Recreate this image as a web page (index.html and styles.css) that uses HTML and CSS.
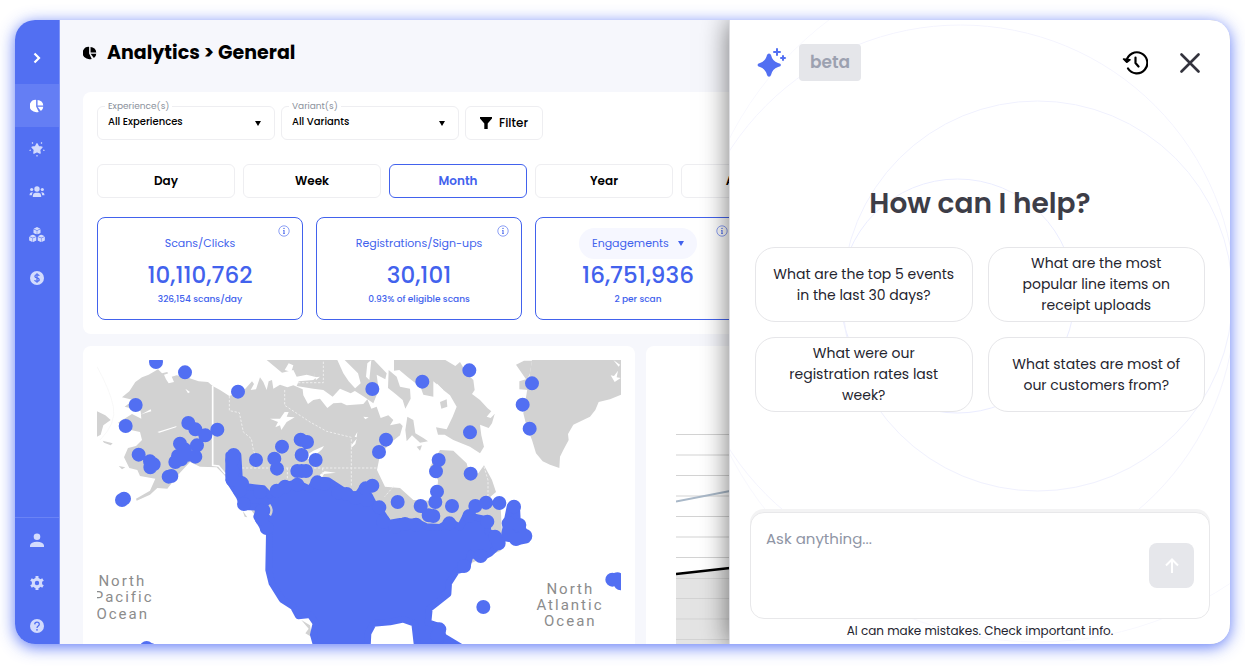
FILE: index.html
```html
<!DOCTYPE html>
<html lang="en">
<head>
  <meta charset="UTF-8" />
  <meta name="viewport" content="width=device-width, initial-scale=1.0" />
  <title>Analytics</title>
  <link rel="stylesheet" href="styles.css">
</head>
<body>
  <svg class="defs" aria-hidden="true">
    <symbol id="pie" viewBox="0 0 24 24">
      <path d="M10.500 1.500A10.500 10.500 0 0 0 2 19Q7 24 15 22.200L10.500 13z" />
      <path d="M13 1.500V11h9.700A10 10 0 0 0 13 1.500z" />
      <path d="M13 13.200h9.700a9 9 0 0 1-4 7.300z" />
    </symbol>
    <symbol id="info" viewBox="0 0 12 12">
      <circle cx="6" cy="6" r="5.200" fill="none" stroke="currentColor" stroke-width=".6" />
      <circle cx="6" cy="3.400" r=".7" />
      <path d="M5 5h1.500v3.500H7V9H5v-.5h.5v-3H5z" />
    </symbol>
    <symbol id="cube" viewBox="0 0 10 10">
      <path d="M5 0l4.500 2.200L5 4.400.500 2.200zM.200 2.800L4.700 5v5L.200 7.800zM9.800 2.800L5.300 5v5l4.500-2.200z" />
    </symbol>
  </svg>

  <div class="app">
    <nav class="sidebar">
      <button class="expand" aria-label="Expand">
        <svg width="8" height="12" viewBox="0 0 8 12"><path d="M1.500 1.500L6 6l-4.500 4.500" fill="none" stroke="#fff" stroke-width="2.200" /></svg>
      </button>
      <a href="#" class="nav-item active" aria-label="Analytics"><svg width="14" height="14"><use href="#pie" /></svg></a>
      <a href="#" class="nav-item" aria-label="Experiences">
        <svg width="16" height="16" viewBox="0 0 16 16"><path d="M8 2.800l1.600 3 3.300.5-2.300 2.400.500 3.400L8 10.700l-3.100 1.400.500-3.400-2.300-2.400 3.300-.500z" stroke="currentColor" stroke-width="1.400" stroke-linejoin="round" /><path d="M3 1.500l1 1M13 1.500l-1 1M.500 9.500l1.300-.4M15.500 9.500l-1.300-.4M8 14v1.500" stroke="currentColor" stroke-width="1.200" /></svg>
      </a>
      <a href="#" class="nav-item" aria-label="Customers">
        <svg width="16" height="14" viewBox="0 0 16 14"><circle cx="8" cy="4" r="2.700" /><circle cx="2.700" cy="4.500" r="1.600" /><circle cx="13.300" cy="4.500" r="1.600" /><path d="M3.800 12v-1.500Q4 8 6.500 7.700h3Q12 8 12.200 10.500V12zM.5 10.200Q.5 7 3.800 7.200 2.900 8.500 2.800 10.200zM15.500 10.200Q15.500 7 12.200 7.200q.9 1.300 1 3z" /></svg>
      </a>
      <a href="#" class="nav-item" aria-label="Products">
        <svg width="16" height="16" viewBox="0 0 16 16"><use href="#cube" x="4.200" y="0" width="7.600" height="7.600" /><use href="#cube" x="0" y="7.500" width="7.600" height="7.600" /><use href="#cube" x="8.400" y="7.500" width="7.600" height="7.600" /></svg>
      </a>
      <a href="#" class="nav-item" aria-label="Billing">
        <svg width="14" height="14" viewBox="0 0 14 14"><circle cx="7" cy="7" r="7" /><path d="M9.200 4.900Q8.900 3.600 7 3.600 4.900 3.700 4.900 5.200 4.900 6.500 7 6.900t2.200 1.900Q9.200 10.300 7 10.400 4.900 10.400 4.700 9M7 2.200v9.600" fill="none" stroke="#526ff2" stroke-width="1.300" /></svg>
      </a>
      <div class="nav-foot">
        <a href="#" class="nav-item" aria-label="Account">
          <svg width="14" height="14" viewBox="0 0 14 14"><circle cx="7" cy="3.700" r="3.300" /><path d="M0 14v-1.700Q1 8.800 7 8.800t7 3.500V14z" /></svg>
        </a>
        <a href="#" class="nav-item" aria-label="Settings">
          <svg width="14" height="14" viewBox="0 0 14 14"><circle cx="7" cy="7" r="3.700" fill="none" stroke="currentColor" stroke-width="3" /><path d="M7 0v3M7 11v3M1 3.500L3.500 5M10.500 9l2.500 1.500M1 10.500L3.500 9M10.500 5L13 3.500" stroke="currentColor" stroke-width="3" /></svg>
        </a>
        <a href="#" class="nav-item" aria-label="Help">
          <svg width="14" height="14" viewBox="0 0 14 14"><circle cx="7" cy="7" r="7" /><path d="M4.700 5.400Q4.800 3.200 7 3.200T9.300 5.300Q9.300 6.300 8.200 7T7 9" fill="none" stroke="#526ff2" stroke-width="1.300" /><circle cx="7" cy="10.800" r=".9" fill="#526ff2" /></svg>
        </a>
      </div>
    </nav>

    <main class="main">
      <h1 class="title"><svg width="14" height="14"><use href="#pie" /></svg>Analytics &gt; General</h1>

      <section class="card summary">
        <div class="filters">
          <div class="field">
            <label for="experience">Experience(s)</label>
            <select id="experience"><option>All Experiences</option></select>
          </div>
          <div class="field">
            <label for="variant">Variant(s)</label>
            <select id="variant"><option>All Variants</option></select>
          </div>
          <button class="filter-btn">
            <svg width="12" height="12" viewBox="0 0 12 12"><path d="M0 0h12v1.500L7.700 6.500V12H4.300V6.500L0 1.500z" /></svg>
            Filter
          </button>
        </div>

        <div class="periods">
          <button>Day</button>
          <button>Week</button>
          <button class="selected">Month</button>
          <button>Year</button>
          <button>All Time</button>
        </div>

        <div class="stats">
          <div class="stat">
            <svg class="info" width="12" height="12"><use href="#info" /></svg>
            <div class="stat-name">Scans/Clicks</div>
            <div class="stat-value">10,110,762</div>
            <div class="stat-note">326,154 scans/day</div>
          </div>
          <div class="stat">
            <svg class="info" width="12" height="12"><use href="#info" /></svg>
            <div class="stat-name">Registrations/Sign-ups</div>
            <div class="stat-value">30,101</div>
            <div class="stat-note">0.93% of eligible scans</div>
          </div>
          <div class="stat">
            <svg class="info" width="12" height="12"><use href="#info" /></svg>
            <div class="stat-name pill">
              <select aria-label="Metric"><option>Engagements</option></select>
            </div>
            <div class="stat-value">16,751,936</div>
            <div class="stat-note">2 per scan</div>
          </div>
        </div>
      </section>

      <div class="row">
        <section class="card map-card">
          <svg class="map" viewBox="51 60 1572 852">
            <!-- land -->
            <g fill="#d2d2d2">
              <path d="M126 172L148 154 166 126 186 112 206 104 234 88 246 100 262 96 270 112 290 106 320 112 356 124 384 126 398 138 420 150 448 168 470 160 496 146 516 124 522 132 512 150 528 148 540 112 550 126 560 150 566 124 576 120 580 146 600 134 622 142 640 136 668 148 670 166 684 192 700 180 720 176 742 204 760 190 784 188 800 196 850 192 862 178 874 206 890 200 902 234 925 226 940 240 930 256 960 250 968 258 960 286 930 310 900 345 891 390 915 440 960 444 1000 480 1050 482 1072 450 1074 420 1050 380 1080 330 1120 332 1160 370 1170 410 1195 400 1212 376 1236 420 1248 456 1220 480 1262 500 1266 580 1262 632 1100 700 600 580 520 520 480 460 430 402 410 382 360 380 330 366 300 398 262 446 232 444 210 464 170 482 168 476 210 452 226 416 180 408 172 390 148 384 132 352 144 324 168 318 186 300 180 276 142 268 114 248 156 222 184 236 182 214 160 206 134 200 160 180z" />
              <path d="M51 214L76 226 92 240 70 256 62 284 51 290zM68 302L98 310 92 316 72 308zM116 378L136 382 126 388z" />
              <path d="M560 60H772L790 100 806 124 830 150 812 160 780 146 758 170 730 150 700 146 650 138 656 124 700 120 710 112 680 104 650 110 640 90 606 98z" />
              <path d="M794 60H882L920 100 916 118 890 104 896 150 880 190 852 170 820 150 842 130 834 100z" />
              <path d="M834 60L852 84 870 62zM942 60H1096L1126 78 1140 66 1160 100 1180 120 1184 150 1176 162 1200 180 1222 204 1244 222 1236 250 1226 264 1200 254 1204 286 1212 320 1200 340 1170 320 1120 300 1094 284 1074 284 1068 262 1100 268 1118 230 1130 200 1110 166 1090 150 1060 124 1060 170 1030 164 1022 142 982 110 958 90 942 92zM926 90L950 110 960 140 990 146 992 176 976 206 968 180 944 160 924 144zM982 230L1000 240 1006 280 1030 294 1044 304 1020 308 996 286 980 304 976 270zM1010 320L1026 316 1020 332z" />
              <path d="M1080 186L1100 178 1102 200 1084 206z" />
              <path d="M1308 74L1332 62H1356L1350 100 1340 124 1346 150 1318 148 1318 124 1338 118z" />
              <path d="M1356 60H1623V164L1590 178 1556 186 1546 210 1530 230 1480 254 1464 282 1466 300 1450 330 1440 350 1438 384 1410 374 1388 364 1368 340 1356 300 1340 260 1330 220 1340 160z" />
              <path d="M664 840L690 856 696 892 676 880 686 866zM488 512L502 532 494 530z" />
            </g>
            <!-- lakes and inlets -->
            <g fill="#fff">
              <path d="M570 236L600 236 614 216 626 216 620 230 644 232 620 246 604 270 600 256 586 262 594 246z" />
              <path d="M672 350L700 332 732 318 726 328 690 360zM720 404L734 394 768 398 732 402 722 420zM812 318L830 296 826 312 816 322zM850 230L866 232 856 238zM824 290L832 276 830 292zM700 92L706 112 720 110 708 120zM614 90L626 70 640 76 634 96z" />
              <path d="M232 276L290 258 288 262 238 278zM316 146L330 156 324 160zM182 224L212 208 214 214 194 220zM252 104L270 98 282 126 266 130 258 118zM862 70L874 60 868 120 858 110zM1240 206L1246 220 1232 234 1220 230zM1070 130L1090 150 1078 162z" />
              <path d="M1600 60L1620 74 1616 80zM1592 106L1602 108 1614 92 1610 112 1622 114 1604 126z" />
            </g>
            <!-- borders -->
            <g fill="none" stroke="#eee" stroke-width="3">
              <path d="M398 138V376L416 378 436 402" stroke="#fff" stroke-width="5" />
              <path d="M448 168V212L478 218 490 276 514 296 520 330 536 372M614 150V196L690 246 740 274 814 292V440M450 384H890M622 384V420M728 384V410M654 128H730V60M940 440L914 470M1212 380L1224 420V470" stroke-dasharray="7 5" />
              <path d="M51 80Q90 150 100 200T60 300" stroke="#f4f4f4" stroke-width="2" />
            </g>
            <!-- scans, dense area -->
            <path class="blob" d="M446 345L474 345 478 410 500 440 550 446 568 466 600 440 650 428 690 448 706 420 744 422 790 452 830 468 850 440 870 470 880 490 900 510 926 550 960 544 1010 546 1040 560 1080 562 1110 544 1140 562 1156 530 1180 530 1226 540 1222 574 1262 594 1260 612 1230 640 1200 656 1172 640 1160 685 1130 692 1106 730 1104 762 1048 806 1044 848 1080 860 1090 890 1140 920 1012 920 1004 850 970 838 930 846 880 850 864 880 862 920H710L700 884 708 850 690 824 655 828 640 800 606 778 576 730 566 690 568 580 548 560 530 530 540 502 490 500 478 470 446 420z" />
            <path class="blob" d="M1290 500L1310 500 1312 540 1336 580 1340 600 1310 606 1274 580z" />
            <path d="M568 494Q580 510 570 526" fill="none" stroke="#d2d2d2" stroke-width="7" />
            <!-- single scans -->
            <path class="dots" d="M228 66h0M315 97h0M167 195h0M137 258h0M474 155h0M325 249h0M346 268h0M376 286h0M412 269h0M300 311h0M314 328h0M351 316h0M346 350h0M294 348h0M304 358h0M320 345h0M286 366h0M176 344h0M210 364h0M221 373h0M211 382h0M266 410h0M274 408h0M126 480h0M132 476h0M461 345h0M528 360h0M606 320h0M583 356h0M591 386h0M662 299h0M681 306h0M665 345h0M707 360h0M652 393h0M665 393h0M678 393h0M200 924h0M212 930h0
            M877 147h0M1027 125h0M1168 91h0M1356 130h0M1328 194h0M1349 266h0M1170 277h0M918 299h0M897 336h0M1076 360h0M1068 394h0M1172 401h0M1071 455h0M1066 486h0M877 437h0M857 445h0M898 502h0M953 486h0M1022 498h0M1046 526h0M1060 528h0M1116 498h0M1186 498h0M1218 488h0M1258 489h0M1302 500h0M1222 545h0M1210 801h0M1597 719h0M1612 718h0M1622 730h0
            M457 360h0M458 394h0M458 420h0M486 430h0M480 452h0M492 492h0M540 456h0M590 452h0M615 440h0M652 434h0M712 427h0M732 432h0M775 458h0M800 462h0M826 474h0M545 512h0M545 536h0M560 564h0M860 480h0M910 545h0M946 560h0M975 552h0M1008 554h0M1108 550h0M1168 528h0M1245 590h0M1256 610h0M1202 648h0M1152 678h0M1318 555h0M1336 588h0M1308 597h0M1286 550h0M1286 585h0M1078 868h0M1072 888h0M1108 918h0" />
            <g class="sea">
              <text x="127" y="738">North</text>
              <text x="131" y="787">Pacific</text>
              <text x="128" y="836">Ocean</text>
              <text x="1471" y="761">North</text>
              <text x="1470" y="810">Atlantic</text>
              <text x="1471" y="859">Ocean</text>
            </g>
          </svg>
        </section>
        <section class="card chart-card">
          <svg width="400" height="211" viewBox="0 0 400 211">
            <path d="M0 140L54 134 400 100V211H0z" fill="#e4e4e4" />
            <path d="M0 .500H400M0 21H400M0 41.500H400M0 62H400M0 82.500H400M0 103H400M0 123.500H400M0 144.500H400M0 164.500H400M0 185H400M0 205.500H400" stroke="#d3d3d3" />
            <path d="M0 67.500L54 57 400 0" fill="none" stroke="#a9b8c8" stroke-width="2" />
            <path d="M0 140L54 134 400 100" fill="none" stroke="#000" stroke-width="2.500" />
          </svg>
        </section>
      </div>
    </main>

    <aside class="assistant">
      <svg class="rings" viewBox="729 20 501 624" preserveAspectRatio="xMidYMin slice">
        <circle cx="957" cy="296" r="117" stroke="#ebedff" />
        <circle cx="1037" cy="296" r="195" stroke="#f0f1fe" />
        <circle cx="960" cy="300" r="275" stroke="#f4f4fe" />
        <circle cx="1037" cy="296" r="346" stroke="#f8f8fe" />
      </svg>
      <header class="assistant-head">
        <svg class="spark" width="30" height="30" viewBox="0 0 30 30"><path d="M12 5.500Q13.500 5.500 14 7 15.300 13 21 15 24 15.500 24 17T21 19Q15.300 21 14 27 13.500 28.800 12 28.800T10 27Q8.700 21 3 19 .500 18.500.500 17T3 15Q8.700 13 10 7 10.500 5.500 12 5.500z" /><path d="M20 1v6M17 4h6M26 8v4M24 10h4" stroke="currentColor" stroke-width="2" stroke-linecap="round" /></svg>
        <span class="beta">beta</span>
        <button class="icon-btn history" aria-label="History">
          <svg width="26" height="24" viewBox="0 0 26 24"><path d="M4.500 10A10.500 10.500 0 1 1 6 17.500M13.500 6.500V12l3 3.500" fill="none" stroke="#000" stroke-width="2.200" stroke-linecap="round" stroke-linejoin="round" /><path d="M1.500 8l3.200 3.300L8 8.800z" fill="#000" stroke="#000" stroke-width="1.500" stroke-linejoin="round" /></svg>
        </button>
        <button class="icon-btn" aria-label="Close">
          <svg width="20" height="20" viewBox="0 0 20 20"><path d="M1.500 1.500l17 17M18.500 1.500l-17 17" stroke="#33333d" stroke-width="2.600" stroke-linecap="round" /></svg>
        </button>
      </header>

      <h2>How can I help?</h2>
      <div class="suggestions">
        <button>What are the top 5 events in the last 30 days?</button>
        <button>What are the most popular line items on receipt uploads</button>
        <button>What were our registration rates last week?</button>
        <button>What states are most of our customers from?</button>
      </div>

      <form class="composer">
        <textarea aria-label="Message" placeholder="Ask anything..."></textarea>
        <button type="button" aria-label="Send">
          <svg width="14" height="16" viewBox="0 0 14 16"><path d="M7 15V1.500M1 7.500l6-6 6 6" fill="none" stroke="#fff" stroke-width="2" /></svg>
        </button>
      </form>
      <p class="note">AI can make mistakes. Check important info.</p>
    </aside>
  </div>
</body>
</html>
```
FILE: styles.css
```css
* {
  box-sizing: border-box;
}
body {
  margin: 0;
  padding: 20px 15px 26px;
  height: 100vh;
  overflow: hidden;
  background: #fff;
  font-family: Poppins, Inter, "Open Sans", sans-serif;
  color: #000;
}
button, select, textarea {
  font-family: inherit;
  color: inherit;
}
button {
  padding: 0;
  background: none;
  border: none;
  cursor: pointer;
}
svg {
  display: block;
  fill: currentColor;
}
.defs {
  position: absolute;
  width: 0;
  height: 0;
}
.app {
  position: relative;
  display: flex;
  height: 100%;
  overflow: hidden;
  border-radius: 20px;
  background: #f6f7fc;
  box-shadow: 0 3px 16px rgba(66, 98, 245, 0.85);
}

/* sidebar */
.sidebar {
  flex: none;
  display: flex;
  flex-direction: column;
  width: 45px;
  border-right: 1px solid #7f94f6;
  background: #526ff2;
  color: #d3dbfd;
}
.expand {
  height: 64px;
  padding-top: 12px;
}
.expand svg {
  margin: 0 auto;
}
.nav-item {
  display: flex;
  align-items: center;
  justify-content: center;
  height: 43px;
  color: inherit;
}
.nav-item.active {
  background: #647ef4;
  color: #fff;
}
.nav-foot {
  margin-top: auto;
  margin-bottom: -3px;
  border-top: 1px solid #6a83f5;
}

/* dashboard */
.main {
  flex: 1;
  min-width: 0;
  padding: 21px 23px 0;
  overflow: hidden;
}
.title {
  display: flex;
  align-items: center;
  gap: 10px;
  margin: 0 0 27px;
  font-size: 19px;
  line-height: 24px;
  font-weight: 700;
}
.card {
  background: #fff;
  border-radius: 8px;
}
.summary {
  margin-bottom: 12px;
  padding: 14px;
}
.filters, .periods, .stats {
  display: flex;
}
.filters {
  gap: 6px;
  margin-bottom: 24px;
}
.field {
  position: relative;
  width: 178px;
  height: 34px;
  border: 1px solid #eeeef1;
  border-radius: 6px;
}
.field label {
  position: absolute;
  top: -7px;
  left: 7px;
  padding: 0 3px;
  background: #fff;
  color: #8b919c;
  font-size: 9px;
  line-height: 12px;
}
.field select {
  width: 100%;
  height: 29px;
  padding: 0 10px;
  appearance: none;
  border: none;
  background: none;
  font-size: 10px;
  font-weight: 500;
}
.field::after, .pill::after {
  content: "";
  border: 3px solid transparent;
  border-top: 5px solid;
  border-bottom: none;
}
.field::after {
  position: absolute;
  right: 13px;
  top: 14px;
}
.filter-btn {
  display: flex;
  align-items: center;
  justify-content: center;
  gap: 7px;
  width: 78px;
  border: 1px solid #eeeef1;
  border-radius: 6px;
  font-size: 12px;
  font-weight: 500;
}
.periods {
  gap: 8px;
  margin-bottom: 19px;
}
.periods button {
  flex: none;
  width: 138px;
  height: 34px;
  border: 1px solid #eeeef1;
  border-radius: 6px;
  font-size: 12px;
  font-weight: 600;
}
.periods .selected {
  border-color: #4262ed;
  color: #4262ed;
}
.stats {
  gap: 13px;
}
.stat {
  position: relative;
  flex: none;
  display: flex;
  flex-direction: column;
  align-items: center;
  width: 206px;
  padding: 10px 0 12px;
  border: 1px solid #4262ed;
  border-radius: 8px;
  color: #4262ed;
}
.info {
  position: absolute;
  top: 7px;
  right: 12px;
}
.stat-name {
  font-size: 11px;
  line-height: 31px;
}
.pill {
  display: flex;
  align-items: center;
  gap: 9px;
  padding: 0 13px;
  border-radius: 16px;
  background: #f6f7ff;
}
.pill select {
  padding: 0;
  appearance: none;
  border: none;
  background: none;
  font-size: 11px;
  line-height: 31px;
}
.stat-value {
  font-size: 23px;
  line-height: 33px;
  font-weight: 500;
}
.stat-note {
  font-size: 9px;
  line-height: 15px;
  font-weight: 500;
}
.row {
  display: flex;
  gap: 11px;
}
.map-card {
  flex: none;
  width: 552px;
  padding: 14px 14px 20px;
}
.map {
  width: 100%;
}
.blob, .dots {
  stroke: #526ff2;
  stroke-linecap: round;
  stroke-linejoin: round;
}
.blob {
  fill: #526ff2;
  stroke-width: 20px;
}
.dots {
  fill: none;
  stroke-width: 42px;
}
.sea text {
  fill: #8c8c8c;
  font-family: Roboto, sans-serif;
  font-size: 45px;
  letter-spacing: 6px;
  text-anchor: middle;
}
.chart-card {
  flex: 1;
  min-width: 0;
  padding: 88px 0 0 30px;
}

/* assistant drawer, slides over the dashboard */
.assistant {
  position: absolute;
  top: 0;
  right: 0;
  bottom: 0;
  display: flex;
  flex-direction: column;
  width: 501px;
  padding: 24px 20px 3px;
  border-left: 1px solid #dedee2;
  background: #fff;
  box-shadow: 0 0 26px rgba(0, 0, 0, 0.55);
  color: #24242e;
}
.rings {
  position: absolute;
  top: 0;
  left: 0;
  width: 100%;
  height: 100%;
  fill: none;
}
.assistant > :not(.rings) {
  position: relative;
}
.assistant-head {
  display: flex;
  align-items: center;
  padding: 0 10px 0 7px;
}
.spark {
  color: #526ff2;
}
.beta {
  margin-left: 12px;
  padding: 0 11px;
  border-radius: 4px;
  background: #e5e6ea;
  color: #9ca1b0;
  font-size: 17px;
  line-height: 37px;
  font-weight: 600;
}
.history {
  margin-left: auto;
  margin-right: 32px;
}
.assistant h2 {
  margin: 105px 0 25px;
  font-size: 28px;
  line-height: 36px;
  font-weight: 600;
  text-align: center;
  color: #3d3d47;
}
.suggestions {
  display: grid;
  grid-template-columns: 1fr 1fr;
  gap: 15px;
  padding: 0 5px;
}
.suggestions button {
  height: 75px;
  padding: 0 16px;
  border: 1px solid #e6e6e9;
  border-radius: 20px;
  background: #fff;
  font-size: 14px;
  line-height: 21px;
}
.composer {
  display: flex;
  align-items: center;
  gap: 12px;
  margin-top: auto;
  padding: 0 15px;
  border: 1px solid #e8e8ea;
  border-radius: 14px;
  background: #fff;
  box-shadow: 0 -3px 0 #f3f3f4;
}
.composer textarea {
  flex: 1;
  min-width: 0;
  height: 105px;
  padding: 14px 0;
  border: none;
  outline: none;
  resize: none;
  background: none;
  font-size: 15px;
  line-height: 24px;
}
.composer textarea::placeholder {
  color: #8f95a5;
}
.composer button {
  display: flex;
  align-items: center;
  justify-content: center;
  width: 45px;
  height: 45px;
  border-radius: 8px;
  background: #e6e7eb;
}
.note {
  margin: 2px 0 0;
  font-size: 12px;
  line-height: 20px;
  text-align: center;
}
```
